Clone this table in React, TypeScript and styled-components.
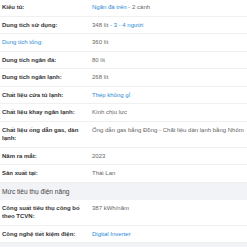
import React from "react";
import styled, { createGlobalStyle } from "styled-components";

const Global = createGlobalStyle`
  html, body { margin: 0; padding: 0; background: #fff; }
  body { font-family: "Liberation Sans", Arial, sans-serif; overflow: hidden; }
`;

const Page = styled.div`
  width: 247px;
  height: 247px;
  background: #f2f3f7;
  overflow: hidden;
`;

const List = styled.div`
  margin-top: -1px;
  background: #fff;
`;

const Row = styled.div`
  display: grid;
  grid-template-columns: 78px 1fr;
  column-gap: 12px;
  padding: 4px 0 4px 2px;
  border-bottom: 1px solid #f0f0f0;
  background: #fff;
  font-size: 6px;
  line-height: 8.5px;
`;

const Label = styled.div<{ $link?: boolean }>`
  color: ${(p) => (p.$link ? "#288ad6" : "#333")};
  font-weight: ${(p) => (p.$link ? 400 : 700)};
`;

const Value = styled.div`
  color: #666;
  white-space: nowrap;
`;

const Link = styled.span`
  color: #288ad6;
`;

const Section = styled.div`
  background: #f2f3f7;
  color: #444;
  font-size: 6.6px;
  line-height: 17px;
  padding-left: 2px;
`;

type Item = { label: string; link?: boolean; value: React.ReactNode };

const group1: Item[] = [
  { label: "Kiểu tủ:", value: <><Link>Ngăn đá trên</Link> - 2 cánh</> },
  { label: "Dung tích sử dụng:", value: <>348 lít <Link>- 3 - 4 người</Link></> },
  { label: "Dung tích tổng:", link: true, value: "360 lít" },
  { label: "Dung tích ngăn đá:", value: "80 lít" },
  { label: "Dung tích ngăn lạnh:", value: "268 lít" },
  { label: "Chất liệu cửa tủ lạnh:", value: <Link>Thép không gỉ</Link> },
  { label: "Chất liệu khay ngăn lạnh:", value: "Kính chịu lực" },
  { label: "Chất liệu ống dẫn gas, dàn lạnh:", value: "Ống dẫn gas bằng Đồng - Chất liệu dàn lạnh bằng Nhôm" },
  { label: "Năm ra mắt:", value: "2023" },
  { label: "Sản xuất tại:", value: "Thái Lan" },
];

const group2: Item[] = [
  { label: "Công suất tiêu thụ công bố theo TCVN:", value: "387 kWh/năm" },
  { label: "Công nghệ tiết kiệm điện:", value: <Link>Digital Inverter</Link> },
];

const renderRows = (items: Item[]) =>
  items.map((it) => (
    <Row key={it.label}>
      <Label $link={it.link}>{it.label}</Label>
      <Value>{it.value}</Value>
    </Row>
  ));

export default function App() {
  return (
    <>
      <Global />
      <Page>
        <List>
          {renderRows(group1)}
          <Section>Mức tiêu thụ điện năng</Section>
          {renderRows(group2)}
        </List>
      </Page>
    </>
  );
}
